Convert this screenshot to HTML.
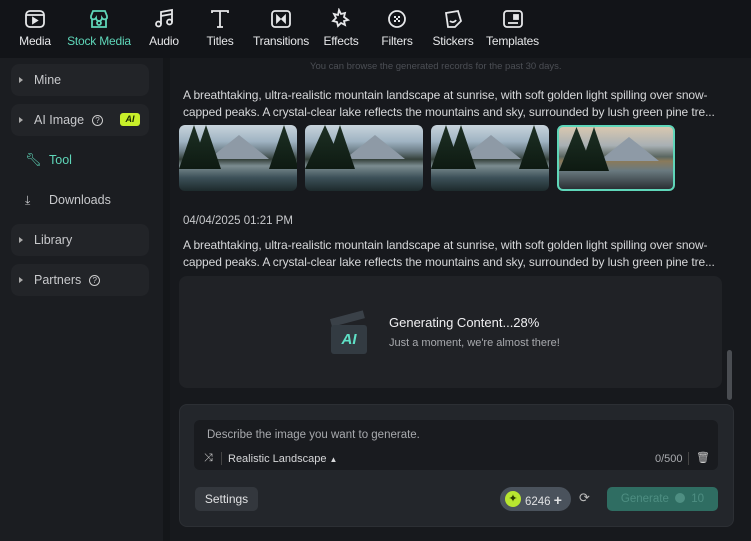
<!DOCTYPE html>
<html><head><meta charset="utf-8"><style>
*{box-sizing:border-box;margin:0;padding:0}
body{width:751px;height:541px;background:#17191d;font-family:"Liberation Sans",sans-serif;overflow:hidden;position:relative;color:#d9dadc}
.top{position:absolute;left:0;top:0;width:751px;height:58px;background:#121418}
.tab{position:absolute;top:8px;text-align:center;font-size:12px;color:#e6e7e9;letter-spacing:-0.2px}
.tab svg{display:block;margin:0 auto 4px;width:22px;height:22px}
.side{position:absolute;left:0;top:58px;width:163px;height:483px;background:#1b1d21}
.gap{position:absolute;left:163px;top:58px;width:7px;height:483px;background:#141619}
.item{position:absolute;left:11px;width:138px;height:32px;background:#222428;border-radius:8px;font-size:12.5px;color:#c8c9cc;line-height:32px;padding-left:23px}
.item:before{content:"";position:absolute;left:8px;top:13px;border-left:4px solid #aaa;border-top:3px solid transparent;border-bottom:3px solid transparent}
.q{display:inline-block;width:11px;height:11px;border:1.3px solid #ccc;border-radius:50%;font-size:8px;line-height:9px;text-align:center;margin-left:8px;vertical-align:1px}
.sub{position:absolute;left:49px;font-size:12.5px}
.desc{position:absolute;left:183px;width:545px;font-size:12px;line-height:17px;color:#d6d7d9;letter-spacing:-0.1px;white-space:nowrap}
.img{position:absolute;top:125px;width:118px;height:66px;border-radius:6px;overflow:hidden;background:linear-gradient(180deg,#c8d4dc 0%,#9fb3c2 25%,#6c7d86 40%,#34403a 52%,#7c8c90 62%,#3c5058 80%,#1d2a2c 100%)}
.img i{position:absolute;top:0;height:44px;width:30px;background:linear-gradient(180deg,#1d3024,#0e1a12);clip-path:polygon(50% 0,100% 100%,0 100%)}
.img b{position:absolute;left:30px;top:10px;width:60px;height:24px;background:#8e9aa6;clip-path:polygon(0 100%,50% 0,100% 100%)}
</style></head><body>
<div class="top">
 <div class="tab" style="left:17px;width:36px"><svg viewBox="0 0 22 22" fill="none" stroke="#e6e7e9" stroke-width="1.8"><rect x="2" y="3" width="18" height="16" rx="4"/><path d="M2 7h18"/><path d="M9 10v5l4-2.5z" fill="#e6e7e9"/></svg>Media</div>
 <div class="tab" style="left:64px;width:70px;color:#5fd6b9"><svg viewBox="0 0 22 22" fill="none" stroke="#5fd6b9" stroke-width="1.8"><path d="M3 8l2-5h12l2 5v2a3 3 0 0 1-5 0 3 3 0 0 1-6 0 3 3 0 0 1-5 0z"/><path d="M4 11v8h14v-8"/><circle cx="11" cy="15" r="2"/></svg>Stock Media</div>
 <div class="tab" style="left:146px;width:36px"><svg viewBox="0 0 22 22" fill="none" stroke="#e6e7e9" stroke-width="1.8"><path d="M8 16V4l11-2v12"/><circle cx="5.5" cy="16" r="2.5"/><circle cx="16.5" cy="14" r="2.5"/><path d="M8 8l11-2"/></svg>Audio</div>
 <div class="tab" style="left:204px;width:32px"><svg viewBox="0 0 22 22" fill="none" stroke="#e6e7e9" stroke-width="1.8"><path d="M3 5V3h16v2M11 3v16M8 19h6"/></svg>Titles</div>
 <div class="tab" style="left:251px;width:60px"><svg viewBox="0 0 22 22" fill="none" stroke="#e6e7e9" stroke-width="1.8"><rect x="2" y="3" width="18" height="16" rx="3"/><path d="M7 8l3 3-3 3zM15 8l-3 3 3 3z" fill="#e6e7e9"/></svg>Transitions</div>
 <div class="tab" style="left:322px;width:38px"><svg viewBox="0 0 22 22" fill="none" stroke="#e6e7e9" stroke-width="1.8"><path d="M9 2l2 4 4-1-1 4 4 3-4 1 1 4-4-2-3 3-1-4-4-1 3-3-2-4 4 1z"/></svg>Effects</div>
 <div class="tab" style="left:380px;width:34px"><svg viewBox="0 0 22 22" fill="none" stroke="#e6e7e9" stroke-width="1.8"><circle cx="11" cy="11" r="8"/><path d="M8 8h2v2H8zM12 8h2v2h-2zM10 10h2v2h-2zM8 12h2v2H8zM12 12h2v2h-2z" fill="#e6e7e9" stroke="none"/></svg>Filters</div>
 <div class="tab" style="left:432px;width:42px"><svg viewBox="0 0 22 22" fill="none" stroke="#e6e7e9" stroke-width="1.8"><path d="M4 5l12-2 3 10-6 6-7 0z"/><path d="M8 13c2 2 5 1 6-1"/></svg>Stickers</div>
 <div class="tab" style="left:485px;width:55px"><svg viewBox="0 0 22 22" fill="none" stroke="#e6e7e9" stroke-width="1.8"><rect x="2" y="3" width="18" height="16" rx="3"/><path d="M6 15h10"/><rect x="12" y="7" width="4" height="4" fill="#e6e7e9"/></svg>Templates</div>
</div>
<div class="side">
 <div class="item" style="top:6px">Mine</div>
 <div class="item" style="top:46px">AI Image<span class="q">?</span><span style="position:absolute;right:9px;top:9px;height:13px;width:20px;background:#c8f02a;color:#1a2a00;border-radius:3px;font-size:9px;font-weight:bold;font-style:italic;line-height:13px;text-align:center">AI</span></div>
 <div class="sub" style="top:95px;color:#5fd6b9"><span style="position:absolute;left:-24px;top:-1px;font-size:13px">🔧︎</span>Tool</div>
 <div class="sub" style="top:135px;color:#c8c9cc"><span style="position:absolute;left:-24px;top:0;font-size:12px">⤓</span>Downloads</div>
 <div class="item" style="top:166px">Library</div>
 <div class="item" style="top:206px">Partners<span class="q">?</span></div>
</div>
<div class="gap"></div>
<div style="position:absolute;left:310px;top:61px;font-size:9.5px;color:#4c4f55">You can browse the generated records for the past 30 days.</div>
<div class="desc" style="top:87px">A breathtaking, ultra-realistic mountain landscape at sunrise, with soft golden light spilling over snow-<br>capped peaks. A crystal-clear lake reflects the mountains and sky, surrounded by lush green pine tre...</div>
<div class="img" style="left:179px"><b></b><i style="left:0"></i><i style="left:12px"></i><i style="left:90px"></i></div>
<div class="img" style="left:305px"><b style="left:40px"></b><i style="left:0;width:40px"></i><i style="left:20px"></i></div>
<div class="img" style="left:431px"><b></b><i style="left:0"></i><i style="left:15px"></i><i style="left:88px"></i></div>
<div class="img" style="left:557px;border:2px solid #5fd6b9;background:linear-gradient(180deg,#d8c8b0 0%,#a8b0b4 30%,#5a6660 48%,#8a7a5a 55%,#6a7a80 70%,#2a3034 100%)"><b style="left:40px"></b><i style="left:0;width:35px"></i><i style="left:20px"></i></div>
<div style="position:absolute;left:183px;top:215px;font-size:11.5px;color:#c8c9cc">04/04/2025 01:21 PM</div>
<div class="desc" style="top:237px">A breathtaking, ultra-realistic mountain landscape at sunrise, with soft golden light spilling over snow-<br>capped peaks. A crystal-clear lake reflects the mountains and sky, surrounded by lush green pine tre...</div>
<div style="position:absolute;left:179px;top:276px;width:543px;height:112px;background:#202226;border-radius:8px"></div>
<div style="position:absolute;left:331px;top:312px;width:36px;height:42px">
 <div style="position:absolute;left:0;top:7px;width:34px;height:8px;background:#3a4148;transform:rotate(-15deg);transform-origin:left"></div>
 <div style="position:absolute;left:0;top:13px;width:36px;height:29px;background:#333b42;border-radius:3px;color:#5fe0c6;font-weight:bold;font-style:italic;font-size:15px;text-align:center;line-height:29px">AI</div>
</div>
<div style="position:absolute;left:389px;top:315px;font-size:13px;color:#f0f0f2">Generating Content...28%</div>
<div style="position:absolute;left:389px;top:337px;font-size:11px;color:#a8aaae">Just a moment, we're almost there!</div>
<div style="position:absolute;left:727px;top:350px;width:5px;height:50px;background:#4a4d52;border-radius:3px"></div>
<div style="position:absolute;left:179px;top:404px;width:555px;height:123px;background:#23262b;border-radius:8px;border:1px solid #2c2f34"></div>
<div style="position:absolute;left:194px;top:420px;width:524px;height:50px;background:#191b1f;border-radius:6px"></div>
<div style="position:absolute;left:207px;top:429px;font-size:11.5px;color:#a8aaae">Describe the image you want to generate.</div>
<div style="position:absolute;left:204px;top:452px;font-size:11px;color:#ccc">⤨</div>
<div style="position:absolute;left:221px;top:452px;width:1px;height:13px;background:#444"></div>
<div style="position:absolute;left:228px;top:453px;font-size:11px;color:#d6d7d9">Realistic Landscape <span style="font-size:8px">▲</span></div>
<div style="position:absolute;left:655px;top:453px;font-size:11px;color:#a8aaae">0/500</div>
<div style="position:absolute;left:688px;top:452px;width:1px;height:13px;background:#444"></div>
<div style="position:absolute;left:696px;top:451px;font-size:11px;color:#ccc">🗑︎</div>
<div style="position:absolute;left:195px;top:487px;width:63px;height:24px;background:#33373d;border-radius:5px;font-size:12px;line-height:24px;text-align:center;color:#e0e1e3">Settings</div>
<div style="position:absolute;left:500px;top:487px;width:71px;height:24px;background:#4a525c;border-radius:12px"></div>
<div style="position:absolute;left:505px;top:491px;width:16px;height:16px;background:#b8e630;border-radius:50%;color:#2a3a00;font-size:11px;line-height:16px;text-align:center">✦</div>
<div style="position:absolute;left:525px;top:492px;font-size:11.5px;color:#e0e1e3">6246 <b style="font-size:14px">+</b></div>
<div style="position:absolute;left:579px;top:490px;font-size:13px;color:#bbb">⟳</div>
<div style="position:absolute;left:607px;top:487px;width:111px;height:24px;background:#2f6d62;border-radius:5px;font-size:11.5px;line-height:24px;text-align:center;color:#4e8e82">Generate <span style="display:inline-block;width:10px;height:10px;border-radius:50%;background:#4e8e82;vertical-align:-1px;margin:0 3px"></span> 10</div>
</body></html>
